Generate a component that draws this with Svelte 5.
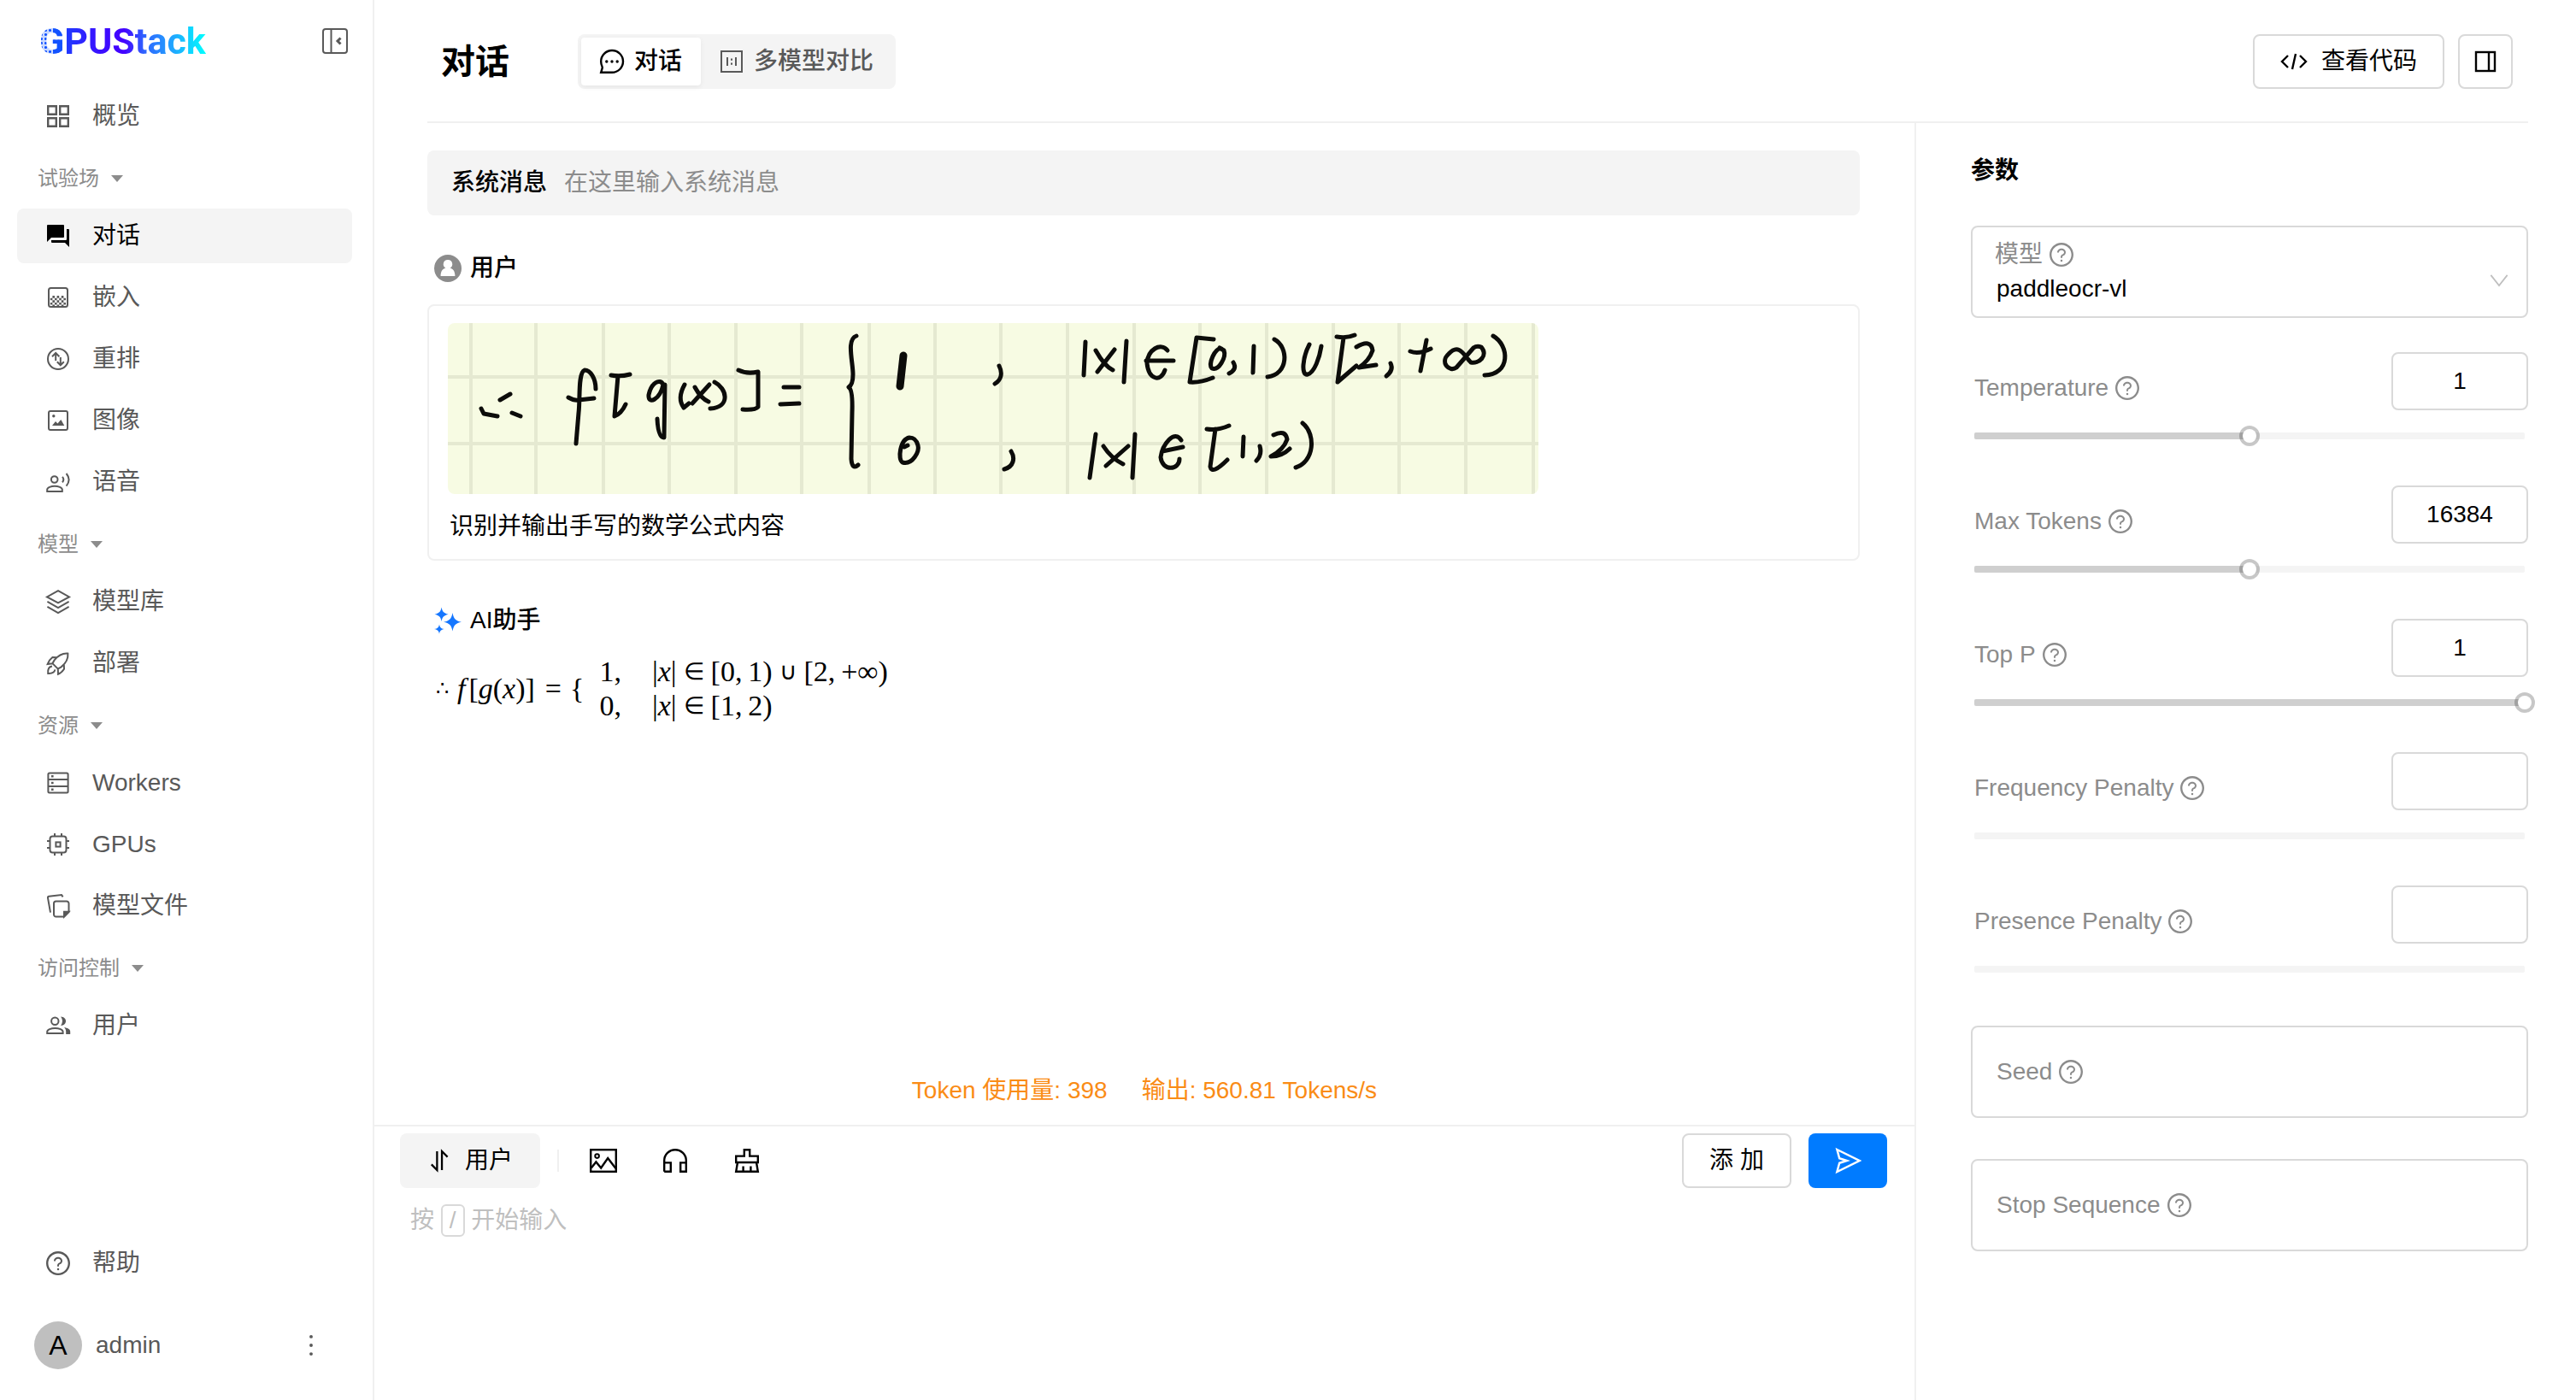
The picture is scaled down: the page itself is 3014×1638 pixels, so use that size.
<script lang="ts">
  type MenuItem = { key: string; label: string; icon: string };
  type MenuGroup = { title: string; items: MenuItem[] };
  type Param = { key: string; label: string; value: string; percent: number | null };

  const QUESTION =
    '<g transform="scale(0.03125)" fill="currentColor" stroke="none"><path d="M512 64C264.6 64 64 264.6 64 512s200.6 448 448 448 448-200.6 448-448S759.4 64 512 64zm0 820c-205.4 0-372-166.6-372-372s166.6-372 372-372 372 166.6 372 372-166.6 372-372 372z"/><path d="M623.6 316.7C593.6 290.4 554 276 512 276s-81.6 14.5-111.6 40.7C369.2 344 352 380.7 352 420v7.6c0 4.4 3.6 8 8 8h48c4.4 0 8-3.6 8-8V420c0-44.1 43.1-80 96-80s96 35.9 96 80c0 31.1-22 59.6-56.1 72.7-21.2 8.1-39.2 22.3-52.1 40.9-13.1 19-19.9 41.8-19.9 64.9V620c0 4.4 3.6 8 8 8h48c4.4 0 8-3.6 8-8v-22.7a48.3 48.3 0 0130.9-44.8c59-22.7 97.1-74.7 97.1-132.5.1-39.3-17.1-76-48.3-103.3zM472 732a40 40 0 1080 0 40 40 0 10-80 0z"/></g>';

  // 32x32 icons, stroked with currentColor unless a shape overrides it
  const ICONS: Record<string, string> = {
    question: QUESTION,
    collapse:
      '<rect x="2" y="2" width="28" height="28" rx="3"/><path d="M11.5 2v28"/><path stroke-width="3" d="M22.5 12.5L19 16l3.5 3.5"/>',
    overview:
      '<path d="M4.2 4.2h9.6v9.6H4.2zM18.2 4.2h9.6v9.6h-9.6zM4.2 18.2h9.6v9.6H4.2zM18.2 18.2h9.6v9.6h-9.6z" stroke-width="2.4"/>',
    chat: '<path fill="currentColor" stroke="none" d="M3 4a1 1 0 0 1 1-1h18a1 1 0 0 1 1 1v13a1 1 0 0 1-1 1H8l-5 5zM26 8h2a1 1 0 0 1 1 1v20l-5-5H9a1 1 0 0 1-1-1v-2h17a1 1 0 0 0 1-1z"/>',
    embed:
      '<rect x="5" y="5" width="22" height="22" rx="2.5"/><path stroke-width="2.6" stroke-dasharray="2.6 2.6" d="M9.4 15.4H24M6.8 18h18.4M9.4 20.6H24M6.8 23.2h18.4M9.4 25.8H24"/>',
    rerank:
      '<circle cx="16" cy="16" r="12"/><path d="M13.2 18V9.5M9 13.2l4.2-4.2 4.2 4.2M18.8 14v9M14.8 19.3l4 4 4-4"/>',
    image:
      '<rect x="5" y="5" width="22" height="22" rx="2"/><path fill="currentColor" stroke="none" d="M9 22l4-5 2.4 2.6L19.3 15l4 7z"/><circle cx="10.8" cy="10.8" r="1.7" fill="currentColor" stroke="none"/>',
    speech:
      '<circle cx="11.7" cy="13" r="3.8"/><path d="M3.2 27v-2.2c0-2.4 4.6-4 8.8-4s8.8 1.6 8.8 4V27zM21 9.8c1.6 2 1.6 4.6 0 6.6M25.6 6c3.8 4.6 3.8 10 0 14.6"/>',
    layers:
      '<path d="M16 3.2L29 10.4 16 17.4 3 10.4zM3.4 15.8L16 23l12.6-7.2M3.4 21.8L16 29l12.6-7.2"/>',
    rocket:
      '<path d="M27.4 4.6C21 4 16 7 11.6 12.4L9.4 16.2l6.4 6.4 3.8-2.2C25 16 28 11 27.4 4.6zM15 9.2L9.4 9C6.6 11.2 4.6 14.2 3.6 17l5.8-.8M22.8 17.2l.2 5.6c-2 3-4.6 5.2-7 6l-.2-6.2M9 19.6c-3.6.4-5.2 4-4.8 8.4 4.4.2 7.6-1.2 8.2-4.6"/>',
    workers:
      '<rect x="4.4" y="4.4" width="23.2" height="23.2" rx="1.5"/><path d="M4.4 12h23.2M4.4 20h23.2"/><path stroke-width="2.6" d="M8 8.2h2.6M8 16h2.6M8 23.8h2.6"/>',
    gpus: '<rect x="6.5" y="6.5" width="19" height="19" rx="3"/><rect x="13.4" y="13.4" width="5.2" height="5.2"/><path d="M12 3v3.4M20 3v3.4M12 25.6V29M20 25.6V29M3 12h3.4M3 20h3.4M25.6 12H29M25.6 20H29"/>',
    files:
      '<path d="M7 23.6L4 6.6c-.2-1 .2-1.6 1.2-1.8L20 3l1.6 2.4M13.5 10.5H26a2.5 2.5 0 0 1 2.5 2.5v10L23 28.6h-9.5A2.5 2.5 0 0 1 11 26.1V13a2.5 2.5 0 0 1 2.5-2.5z"/><path fill="currentColor" d="M28.5 22.8H23v5.8z"/>',
    users:
      '<circle cx="12.3" cy="10.8" r="4.2"/><path d="M3.2 25v-1.8c0-2.6 4.6-4.2 9.2-4.2s9.2 1.6 9.2 4.2V25z"/><path fill="currentColor" stroke="none" d="M19 5.6c8 .2 8 10.2 0 10.4 2.6-3 2.6-7.4 0-10.4zM23 18c4 .6 7.2 2.2 7.2 5v3h-5v-3c0-2-.8-3.7-2.2-5z"/>',
    more: '<g fill="currentColor" stroke="none"><circle cx="16" cy="4.5" r="2.2"/><circle cx="16" cy="16" r="2.2"/><circle cx="16" cy="27.5" r="2.2"/></g>',
    bubble:
      '<path stroke-width="2.4" d="M3.2 28.8h12.9A12.9 12.9 0 1 0 3.2 16c0 2 .5 4 1.3 5.7.3.6.4 1.2.2 1.9z"/><g fill="currentColor" stroke="none"><circle cx="9.8" cy="16" r="1.7"/><circle cx="16" cy="16" r="1.7"/><circle cx="22.2" cy="16" r="1.7"/></g>',
    compare:
      '<rect x="4" y="4" width="24" height="24"/><path d="M11 11v10M21 11v10M16 12.5v2.2M16 17.5v2.2"/>',
    code: '<path stroke-width="2.4" d="M9 9l-7 7 7 7M23 9l7 7-7 7M18 7l-4 18"/>',
    panel: '<rect x="5" y="5" width="22" height="22" stroke-width="2.4"/><path stroke-width="2.4" d="M20 5v22"/>',
    swap: '<path stroke-width="2.6" d="M13 3.5v25L5.5 21M19.5 28.5v-25L27 11"/>',
    picture:
      '<rect x="1.2" y="3.2" width="29.6" height="25.6" stroke-width="2.4"/><circle cx="8.6" cy="10.6" r="2.3"/><path stroke-width="2.4" d="M1.8 24.6L7.4 17.4l5.8 7 8-11.4 9.2 12"/>',
    headphones:
      '<path stroke-width="2.4" d="M3.2 28.8V16a12.8 12.8 0 0 1 25.6 0v12.8h-6.6V18.4h6.6M3.2 18.4h7.6v10.4H3.2"/>',
    clear:
      '<path stroke-width="2.4" d="M3.2 18V10.6h9.6V3.2h6.4v7.4h9.6V18zM5 18L3.2 28.8h25.6L27 18M11.6 28.8v-6.4M20.4 28.8v-6.4"/>',
    send: '<path stroke-width="2.4" d="M3.4 3L29.6 16 3.4 29l2.8-10.2L15 16l-8.8-2.8z"/>',
    avatar:
      '<circle cx="16" cy="16" r="16" fill="#8c8c8c" stroke="none"/><path fill="#fff" stroke="none" d="M16 6a5 5 0 0 1 2.6 9.4c3.6 1 5.8 4 5.8 9.600H7.600c0-5.600 2.200-8.600 5.800-9.600A5 5 0 0 1 16 6z"/>',
    sparkles:
      '<g fill="#1677ff" stroke="none"><path d="M8.600.5c1 5 2.400 6.800 8 8.200-5.600 1.400-7 3.200-8 8.200-1-5-2.400-6.800-8-8.200 5.600-1.400 7-3.200 8-8.200z"/><path d="M21.500 7c1.400 7.200 3.500 9.300 10.500 10.800-7 1.500-9.100 3.600-10.500 10.800-1.400-7.200-3.500-9.300-10.500-10.800 7-1.500 9.100-3.600 10.500-10.800z"/><path d="M6 20.500c.7 3.600 2 4.800 5.800 5.600-3.800.8-5.100 2-5.800 5.600-.7-3.600-2-4.800-5.800-5.600 3.800-.8 5.100-2 5.800-5.600z"/></g>',
    down: '<path d="M5 9l11 14L27 9"/>',
  };

  const groups: MenuGroup[] = [
    {
      title: '试验场',
      items: [
        { key: 'chat', label: '对话', icon: 'chat' },
        { key: 'embedding', label: '嵌入', icon: 'embed' },
        { key: 'rerank', label: '重排', icon: 'rerank' },
        { key: 'image', label: '图像', icon: 'image' },
        { key: 'speech', label: '语音', icon: 'speech' },
      ],
    },
    {
      title: '模型',
      items: [
        { key: 'catalog', label: '模型库', icon: 'layers' },
        { key: 'deployments', label: '部署', icon: 'rocket' },
      ],
    },
    {
      title: '资源',
      items: [
        { key: 'workers', label: 'Workers', icon: 'workers' },
        { key: 'gpus', label: 'GPUs', icon: 'gpus' },
        { key: 'files', label: '模型文件', icon: 'files' },
      ],
    },
    {
      title: '访问控制',
      items: [{ key: 'users', label: '用户', icon: 'users' }],
    },
  ];

  const GRID_X = [27, 103, 182, 259, 337, 414, 493, 570, 647, 725, 803, 880, 958, 1036, 1113, 1191, 1270];
  const GRID_Y = [63, 141];

  // pen strokes of the uploaded note
  const STROKES = [
    'M61 90L73 83M39 100L42 106L58 109M75 105L85 109',
    'M173 77C173 65 167 55 160 55C152 58 155 90 153 105L150 141M141 87Q148 91 153 90L171 88',
    'M191 61Q202 63 213 60M199 62L195 109Q203 106 208 95',
    'M252 72C248 64 238 70 235 84C234 96 248 90 252 72M254 72L253 134Q246 134 245 112',
    'M277 72Q268 88 276 99L282 94M289 75Q296 88 305 92M306 72L286 94',
    'M312 69C326 76 332 98 307 100M340 55Q350 60 363 57L363 98Q360 102 345 101',
    'M393 75L411 75M389 95L411 94',
    'M478 15C466 19 474 45 474 60Q474 72 469 75Q474 78 473 105L472 159Q473 172 480 166',
    'M540 134C529 136 526 160 532 163C544 166 552 150 550 143C548 136 545 134 540 134M534 145L538 143',
    'M645 50C649 58 648 66 640 71M659 150C664 158 662 168 651 171',
    'M746 22L744 61M758 32Q768 50 778 55M780 31L760 57M794 21L791 69',
    'M842 32C834 22 819 31 818 47C820 66 834 70 839 55M817 44H849',
    'M896 19L876 17L868 69Q880 70 895 64M905 30C898 28 889 48 894 53C902 56 911 40 908 32L903 29M919 46Q924 54 914 59',
    'M943 27L942 58M967 19C984 28 984 60 959 63',
    'M1008 25C1000 40 998 62 1006 60C1014 58 1020 40 1022 27',
    'M1040 16Q1052 18 1061 14M1048 17L1041 69L1063 50',
    'M1063 28Q1080 18 1082 32Q1078 44 1066 52L1086 49M1103 47Q1107 55 1098 62',
    'M1126 33Q1136 37 1150 30M1145 20L1138 56',
    'M1200 29L1180 52C1172 58 1160 46 1171 36C1184 22 1190 40 1197 46C1206 48 1218 38 1209 28Q1204 26 1200 29',
    'M1223 15C1242 26 1244 60 1213 61',
    'M758 130L751 181M767 144Q776 158 790 165M796 144L770 167M804 130L801 181',
    'M858 137C850 124 836 142 834 157C836 174 856 172 856 159M836 150L860 145',
    'M888 124Q900 126 914 120M898 124L892 168Q894 178 912 160M931 133L930 156M950 144Q953 154 946 161',
    'M966 131Q980 124 982 136Q978 148 963 156Q976 156 985 147M1000 117C1016 130 1014 162 992 169',
  ];

  let selected = $state('chat');
  let mode = $state('chat');
  let message = $state('');
  let params = $state<Param[]>([
    { key: 'temperature', label: 'Temperature', value: '1', percent: 50 },
    { key: 'max_tokens', label: 'Max Tokens', value: '16384', percent: 50 },
    { key: 'top_p', label: 'Top P', value: '1', percent: 100 },
    { key: 'frequency_penalty', label: 'Frequency Penalty', value: '', percent: null },
    { key: 'presence_penalty', label: 'Presence Penalty', value: '', percent: null },
  ]);
</script>

{#snippet icon(name: string, size = 32)}
  <svg
    class="icon"
    width={size}
    height={size}
    viewBox="0 0 32 32"
    fill="none"
    stroke="currentColor"
    stroke-width="2"
    aria-hidden="true"
  >{@html ICONS[name]}</svg>
{/snippet}

{#snippet navItem(item: MenuItem)}
  <button
    type="button"
    class="nav-item"
    class:active={selected === item.key}
    onclick={() => (selected = item.key)}
  >
    {@render icon(item.icon)}
    <span>{item.label}</span>
  </button>
{/snippet}

<div class="app">
  <aside class="sidebar">
    <div class="brand">
      <span class="logo"><span class="logo-g">G</span><span class="logo-rest">PUStack</span></span>
      <button type="button" class="plain" aria-label="收起菜单">{@render icon('collapse')}</button>
    </div>

    <nav>
      {@render navItem({ key: 'overview', label: '概览', icon: 'overview' })}
      {#each groups as group (group.title)}
        <button type="button" class="group-title">
          {group.title}
          <svg width="14" height="8" viewBox="0 0 14 8" aria-hidden="true"><path d="M0 0h14L7 8z" fill="currentColor" /></svg>
        </button>
        <div class="group-items">
          {#each group.items as item (item.key)}
            {@render navItem(item)}
          {/each}
        </div>
      {/each}
    </nav>

    <div class="sidebar-footer">
      {@render navItem({ key: 'help', label: '帮助', icon: 'question' })}
      <div class="account">
        <span class="avatar">A</span>
        <span class="account-name">admin</span>
        <button type="button" class="plain" aria-label="更多">{@render icon('more', 28)}</button>
      </div>
    </div>
  </aside>

  <main>
    <header>
      <h1>对话</h1>
      <div class="segmented">
        <button type="button" class:active={mode === 'chat'} onclick={() => (mode = 'chat')}>
          {@render icon('bubble')}对话
        </button>
        <button type="button" class:active={mode === 'compare'} onclick={() => (mode = 'compare')}>
          {@render icon('compare')}多模型对比
        </button>
      </div>
      <div class="header-actions">
        <button type="button" class="btn">{@render icon('code')}查看代码</button>
        <button type="button" class="btn square" aria-label="参数面板">{@render icon('panel')}</button>
      </div>
    </header>

    <div class="body">
      <section class="chat">
        <div class="messages">
          <div class="system">
            <label for="system-message">系统消息</label>
            <input id="system-message" type="text" placeholder="在这里输入系统消息" />
          </div>

          <article class="message user">
            <h2>{@render icon('avatar')}用户</h2>
            <div class="card">
              <svg class="note" viewBox="0 0 1276 200" role="img" aria-label="手写的数学公式">
                <rect width="1276" height="200" fill="#f7fbe3" />
                <g stroke="#e5e9d1" stroke-width="4">
                  {#each GRID_X as x}
                    <path d="M{x} 0V200" />
                  {/each}
                  {#each GRID_Y as y}
                    <path d="M0 {y}H1276" />
                  {/each}
                </g>
                <g class="ink">
                  {#each STROKES as d}
                    <path {d} />
                  {/each}
                  <path class="thick" d="M533 38L529 74" />
                </g>
              </svg>
              <p>识别并输出手写的数学公式内容</p>
            </div>
          </article>

          <article class="message assistant">
            <h2>{@render icon('sparkles')}AI助手</h2>
            <div class="formula">
              <span class="therefore">∴</span>
              <span><i class="fn">f</i>[<i>g</i>(<i>x</i>)]</span>
              <span class="equals">=</span>
              <span>{'{'}</span>
              <span class="cases">
                <span>1,</span>
                <span class="condition"><span>|<i>x</i>|</span><span class="rel">∈</span><span>[0,&thinsp;1)</span><span class="rel">∪</span><span>[2,&thinsp;+∞)</span></span>
                <span>0,</span>
                <span class="condition"><span>|<i>x</i>|</span><span class="rel">∈</span><span>[1,&thinsp;2)</span></span>
              </span>
            </div>
          </article>
        </div>

        <div class="usage">
          <span>Token 使用量: 398</span>
          <span>输出: 560.81 Tokens/s</span>
        </div>

        <div class="composer">
          <div class="toolbar">
            <button type="button" class="role">{@render icon('swap', 28)}用户</button>
            <span class="divider"></span>
            <div class="tools">
              <button type="button" class="plain" aria-label="上传图片">{@render icon('picture')}</button>
              <button type="button" class="plain" aria-label="上传音频">{@render icon('headphones')}</button>
              <button type="button" class="plain" aria-label="清空消息">{@render icon('clear')}</button>
            </div>
            <button type="button" class="btn add">添 加</button>
            <button type="button" class="btn send" aria-label="发送">{@render icon('send')}</button>
          </div>
          <div class="editor">
            <textarea id="message" aria-label="消息内容" bind:value={message}></textarea>
            {#if !message}
              <label class="hint" for="message">按 <kbd>/</kbd> 开始输入</label>
            {/if}
          </div>
        </div>
      </section>

      <aside class="params">
        <h2>参数</h2>

        <div class="field model">
          <label for="model">模型 {@render icon('question')}</label>
          <select id="model">
            <option>paddleocr-vl</option>
          </select>
          <span class="arrow">{@render icon('down', 28)}</span>
        </div>

        {#each params as param (param.key)}
          <div class="param">
            <div class="param-head">
              <label for={param.key}>{param.label} {@render icon('question')}</label>
              <input id={param.key} type="text" inputmode="decimal" bind:value={param.value} />
            </div>
            <div class="slider">
              <div class="fill" style:width="{param.percent ?? 0}%"></div>
              <input
                type="range"
                class:unset={param.percent === null}
                min="0"
                max="100"
                value={param.percent ?? 0}
                oninput={(e) => (param.percent = Number(e.currentTarget.value))}
                aria-label={param.label}
              />
            </div>
          </div>
        {/each}

        <div class="extra">
          <div class="field">
            <label for="seed">Seed {@render icon('question')}</label>
            <input id="seed" type="text" />
          </div>
          <div class="field">
            <label for="stop">Stop Sequence {@render icon('question')}</label>
            <input id="stop" type="text" />
          </div>
        </div>
      </aside>
    </div>
  </main>
</div>

<style>
  :global(body) {
    margin: 0;
    background: #fff;
  }

  .app {
    --text: #000;
    --muted: #595959;
    --weak: #8c8c8c;
    --fill: #f4f4f4;
    --split: #f0f0f0;
    --border: #d9d9d9;
    display: flex;
    min-height: 100vh;
    font-family: 'Liberation Sans', 'Noto Sans CJK SC', sans-serif;
    font-size: 28px;
    line-height: 40px;
    color: var(--text);
  }

  .app * {
    box-sizing: border-box;
  }

  button,
  input,
  select,
  textarea {
    font: inherit;
    color: inherit;
    margin: 0;
    padding: 0;
    border: 0;
    background: none;
    outline: none;
  }

  button {
    cursor: pointer;
  }

  h1,
  h2,
  p {
    margin: 0;
  }

  .icon {
    flex: none;
    display: block;
  }

  .plain {
    display: flex;
  }

  /* sidebar */
  .sidebar {
    flex: none;
    width: 438px;
    display: flex;
    flex-direction: column;
    border-right: 2px solid var(--split);
    color: var(--muted);
  }

  .brand {
    display: flex;
    align-items: center;
    justify-content: space-between;
    height: 96px;
    padding: 0 28px 0 46px;
  }

  .logo {
    font-family: Roboto, sans-serif;
    font-size: 43px;
    font-weight: 700;
    line-height: 48px;
    color: transparent;
  }

  .logo-g {
    background:
      linear-gradient(90deg, transparent 55%, #1252ff 55%),
      radial-gradient(circle, #1252ff 1px, #c8d8ff 2px) 0 0 / 5px 5px;
    background-clip: text;
  }

  .logo-rest {
    background: linear-gradient(90deg, #1f3cff, #3a10ff 25%, #4400ff 42%, #2f62ff 56%, #22a0ff 75%, #00ffff);
    background-clip: text;
  }

  nav {
    padding: 8px 24px 0 20px;
  }

  .nav-item {
    display: flex;
    align-items: center;
    gap: 24px;
    width: 100%;
    height: 64px;
    padding: 0 32px;
    border-radius: 8px;
  }

  .nav-item.active {
    background: var(--fill);
    color: var(--text);
  }

  .group-title {
    display: flex;
    align-items: center;
    gap: 14px;
    height: 76px;
    padding: 6px 24px 0;
    font-size: 24px;
    color: var(--weak);
  }

  .group-items {
    display: flex;
    flex-direction: column;
    gap: 8px;
  }

  .sidebar-footer {
    margin-top: auto;
    padding: 0 24px 36px 20px;
  }

  .account {
    display: flex;
    align-items: center;
    gap: 16px;
    padding: 36px 34px 0 20px;
  }

  .avatar {
    display: flex;
    align-items: center;
    justify-content: center;
    width: 56px;
    height: 56px;
    border-radius: 50%;
    background: #bfbfbf;
    color: var(--text);
    font-size: 32px;
  }

  .account-name {
    flex: 1;
  }

  /* page header */
  main {
    flex: 1;
    min-width: 0;
    display: flex;
    flex-direction: column;
  }

  header {
    display: flex;
    align-items: center;
    height: 144px;
    margin: 0 56px 0 62px;
    padding: 2px 18px 0 16px;
    border-bottom: 2px solid var(--split);
  }

  h1 {
    font-size: 40px;
    font-weight: 600;
    line-height: 56px;
  }

  .segmented {
    display: flex;
    margin-left: 80px;
    padding: 4px;
    border-radius: 8px;
    background: var(--fill);
  }

  .segmented button {
    display: flex;
    align-items: center;
    gap: 10px;
    height: 56px;
    padding: 0 22px 0 20px;
    border-radius: 4px;
    font-weight: 500;
    color: var(--muted);
  }

  .segmented .active {
    background: #fff;
    color: var(--text);
    box-shadow: 0 2px 6px rgba(0, 0, 0, 0.06);
  }

  .header-actions {
    display: flex;
    gap: 16px;
    margin-left: auto;
  }

  .btn {
    display: flex;
    align-items: center;
    justify-content: center;
    gap: 16px;
    height: 64px;
    padding: 0 30px;
    border: 2px solid var(--border);
    border-radius: 8px;
  }

  .btn.square {
    width: 64px;
    padding: 0;
  }

  .body {
    flex: 1;
    display: flex;
  }

  /* conversation */
  .chat {
    flex: 1;
    min-width: 0;
    display: flex;
    flex-direction: column;
  }

  .messages {
    flex: 1;
    padding: 32px 64px 0 62px;
  }

  .system {
    display: flex;
    align-items: center;
    gap: 20px;
    height: 76px;
    padding: 0 28px;
    border-radius: 8px;
    background: var(--fill);
  }

  .system label {
    font-weight: 500;
  }

  .system input {
    flex: 1;
  }

  .system input::placeholder {
    color: var(--weak);
  }

  .message h2 {
    display: flex;
    align-items: center;
    gap: 10px;
    padding-left: 8px;
    font-size: 28px;
    font-weight: 500;
    line-height: 40px;
  }

  .user {
    margin-top: 42px;
  }

  .assistant {
    margin-top: 50px;
  }

  .card {
    margin-top: 22px;
    padding: 20px 22px 18px;
    border: 2px solid var(--split);
    border-radius: 8px;
  }

  .note {
    display: block;
    width: 1276px;
    max-width: 100%;
    border-radius: 8px;
  }

  .ink {
    fill: none;
    stroke: #0c0c0a;
    stroke-width: 5;
    stroke-linecap: round;
    stroke-linejoin: round;
  }

  .thick {
    stroke-width: 9;
  }

  .card p {
    margin-top: 18px;
    padding: 0 2px;
  }

  .formula {
    display: flex;
    align-items: center;
    margin-top: 20px;
    padding-left: 10px;
    font-family: 'Liberation Serif', serif;
    font-size: 34px;
  }

  .formula .therefore {
    margin-right: 10px;
    font-size: 24px;
  }

  .formula .fn {
    margin-right: 4px;
  }

  .formula .equals {
    margin: 0 10px 0 12px;
  }

  .cases {
    display: grid;
    grid-template-columns: auto 1fr;
    column-gap: 36px;
    margin-left: 18px;
  }

  .condition {
    display: flex;
    align-items: center;
  }

  .rel {
    margin: 0 8px;
    font-size: 28px;
  }

  .usage {
    display: flex;
    justify-content: center;
    gap: 40px;
    padding: 0 62px 20px;
    color: #fa8c16;
  }

  .composer {
    display: flex;
    flex-direction: column;
    height: 322px;
    border-top: 2px solid var(--split);
  }

  .toolbar {
    display: flex;
    align-items: center;
    padding: 8px 32px 0 30px;
  }

  .role {
    display: flex;
    align-items: center;
    gap: 16px;
    height: 64px;
    padding: 0 32px;
    border-radius: 8px;
    background: var(--fill);
  }

  .divider {
    width: 2px;
    height: 26px;
    margin: 0 36px 0 20px;
    background: var(--split);
  }

  .tools {
    flex: 1;
    display: flex;
    gap: 52px;
  }

  .btn.add {
    width: 128px;
    padding: 0;
  }

  .btn.send {
    width: 92px;
    margin-left: 20px;
    padding: 0;
    border: 0;
    background: #007bff;
    color: #fff;
  }

  .editor {
    position: relative;
    flex: 1;
    padding: 18px 40px 20px 42px;
  }

  .editor textarea {
    display: block;
    width: 100%;
    height: 100%;
    resize: none;
  }

  .hint {
    position: absolute;
    top: 18px;
    left: 42px;
    color: #bfbfbf;
  }

  .hint kbd {
    display: inline-block;
    padding: 0 8px;
    border: 2px solid var(--border);
    border-radius: 6px;
    font-family: inherit;
    line-height: 34px;
  }

  /* parameters */
  .params {
    flex: none;
    width: 774px;
    padding: 36px 56px 0 64px;
    border-left: 2px solid var(--split);
  }

  .params h2 {
    margin-bottom: 44px;
    font-size: 28px;
    font-weight: 600;
    line-height: 40px;
  }

  .params label {
    display: flex;
    align-items: center;
    gap: 6px;
    color: var(--weak);
  }

  .field {
    display: grid;
    align-items: center;
    height: 108px;
    margin-bottom: 48px;
    border: 2px solid var(--border);
    border-radius: 8px;
  }

  .field > * {
    grid-area: 1 / 1;
  }

  .field label {
    padding-left: 28px;
  }

  .field input,
  .field select {
    width: 100%;
    height: 100%;
    padding: 0 28px;
  }

  .extra {
    padding-top: 8px;
  }

  .model {
    margin-bottom: 40px;
  }

  .model label {
    align-self: start;
    padding: 12px 0 0 26px;
  }

  .model select {
    appearance: none;
    padding: 40px 28px 0;
  }

  .model .arrow {
    justify-self: end;
    padding: 20px 18px 0 0;
    color: #bfbfbf;
    pointer-events: none;
  }

  .param {
    height: 102px;
    margin-bottom: 54px;
  }

  .param-head {
    display: flex;
    justify-content: space-between;
    height: 68px;
  }

  .param-head label {
    padding: 16px 0 0 4px;
  }

  .param-head input {
    width: 160px;
    border: 2px solid var(--border);
    border-radius: 8px;
    text-align: center;
  }

  .slider {
    position: relative;
    height: 8px;
    margin: 26px 4px 0;
    border-radius: 2px;
    background: var(--fill);
  }

  .fill {
    height: 100%;
    border-radius: 2px;
    background: #cfcfcf;
  }

  .slider input {
    position: absolute;
    top: -8px;
    left: -8px;
    width: calc(100% + 16px);
    height: 24px;
    appearance: none;
    cursor: pointer;
  }

  .slider input::-webkit-slider-thumb {
    appearance: none;
    width: 16px;
    height: 16px;
    border-radius: 50%;
    background: #fff;
    box-shadow: 0 0 0 4px rgba(0, 0, 0, 0.22);
  }

  .slider input.unset::-webkit-slider-thumb {
    visibility: hidden;
  }
</style>
